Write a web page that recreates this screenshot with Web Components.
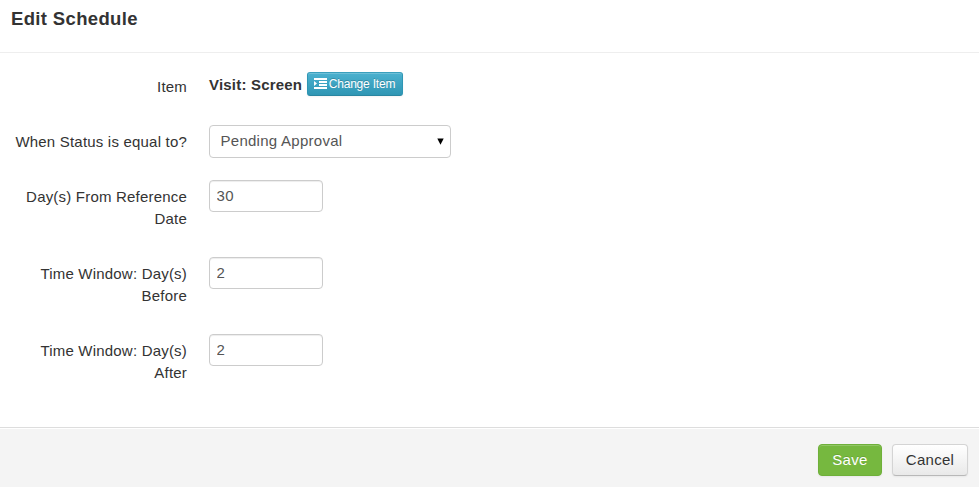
<!DOCTYPE html>
<html lang="en"><head><meta charset="utf-8"><title>Edit Schedule</title>
<style>body{margin:0;background:#fff;font-family:"Liberation Sans",Arial,sans-serif;color:#333;font-size:15px;letter-spacing:.2px}</style></head>
<body>
<schedule-dialog></schedule-dialog>
<script>
const define=(name,html,setup)=>customElements.define(name,class extends HTMLElement{
  constructor(){super();this.attachShadow({mode:'open'}).innerHTML=html;}
  connectedCallback(){if(setup)setup(this,this.shadowRoot);}
});
define('form-row',`<style>
:host{display:flex;height:var(--h,55px);box-sizing:border-box;line-height:22px}
.label{width:187px;box-sizing:border-box;padding:6px 0 0 10px;text-align:right;flex:none}
.control{padding-left:22px;display:flex;align-items:flex-start}
</style><div class="label"><slot name="label"></slot></div><div class="control"><slot></slot></div>`);
define('text-field',`<style>
:host{display:block;width:114px;height:32px}
input{box-sizing:border-box;width:100%;height:100%;border:1px solid #ccc;border-radius:4px;padding:0 6px 2px 6.5px;font:inherit;letter-spacing:.3px;color:#555;background:#fff;box-shadow:inset 0 1px 1px rgba(0,0,0,.075);outline:0}
</style><input type="text">`,(h,r)=>{r.querySelector('input').value=h.getAttribute('value');});
define('select-field',`<style>
:host{display:flex;box-sizing:border-box;width:242px;height:33px;border:1px solid #ccc;border-radius:4px;align-items:center;justify-content:space-between;padding:0 6px 1px 10.5px;color:#555;letter-spacing:.27px}
svg{display:block}
</style><slot></slot><svg width="7" height="7" viewBox="0 0 7 7"><path d="M.3 .5h6.4L3.5 6.8z" fill="#000"/></svg>`);
define('action-button',`<style>
:host{display:block}
button{box-sizing:border-box;height:32px;width:100%;padding:0 0 2px;font:inherit;letter-spacing:.3px;border:1px solid #d4d4d4;border-bottom-color:#b8b8b8;border-radius:4px;color:#333;background:linear-gradient(#fff,#e9e9e9);box-shadow:inset 0 1px 0 rgba(255,255,255,.2),0 1px 2px rgba(0,0,0,.05);display:flex;align-items:center;justify-content:center}
:host([kind=save]) button{color:#fff;background:#76b83f;border-color:#6fb03a;text-shadow:0 -1px 0 rgba(0,0,0,.12)}
:host([kind=info]) button{height:24px;padding:0 1px 0 0;font-size:12px;letter-spacing:-.2px;color:#fff;background:linear-gradient(#4bb1cf,#2f96b4);border-color:#3a9fbd #2f96b4 #2986a1;border-radius:3px;text-shadow:0 -1px 0 rgba(0,0,0,.2)}
</style><button type="button"><slot></slot></button>`);
define('indent-icon',`<style>:host{display:block;width:13px;height:12px;margin-right:2px}svg{display:block}</style>
<svg width="13" height="12" viewBox="0 0 13 12" fill="#fff"><path d="M0 0h13v2H0zM5 3h8v2H5zM5 6h8v2H5zM0 9h13v2H0zM0 3l3 2.5L0 8z"/></svg>`);
define('schedule-dialog',`<style>
:host{display:flex;flex-direction:column;height:487px}
header{height:53px;box-sizing:border-box;border-bottom:1px solid #eee;padding:8px 11px}
h3{margin:0;font-size:18.5px;line-height:22px;letter-spacing:.35px}
main{flex:1;padding-top:17px}
b{line-height:30px;width:98px;white-space:nowrap;letter-spacing:.2px}
.item{display:flex}
.info{width:96px;margin-top:2px}
footer{height:60px;box-sizing:border-box;background:#f4f4f4;border-top:1px solid #ddd;box-shadow:inset 0 1px 0 #fff;display:flex;justify-content:flex-end;gap:10px;padding:16px 11px 0}
</style>
<header><h3>Edit Schedule</h3></header>
<main>
<form-row><span slot="label">Item</span><div class="item"><b>Visit: Screen</b><action-button class="info" kind="info"><indent-icon></indent-icon>Change Item</action-button></div></form-row>
<form-row><span slot="label">When Status is equal to?</span><select-field>Pending Approval</select-field></form-row>
<form-row style="--h:77px"><span slot="label">Day(s) From Reference Date</span><text-field value="30"></text-field></form-row>
<form-row style="--h:77px"><span slot="label">Time Window: Day(s) Before</span><text-field value="2"></text-field></form-row>
<form-row style="--h:77px"><span slot="label">Time Window: Day(s) After</span><text-field value="2"></text-field></form-row>
</main>
<footer><action-button kind="save" style="width:64px">Save</action-button><action-button style="width:76px">Cancel</action-button></footer>`);
</script></body></html>
